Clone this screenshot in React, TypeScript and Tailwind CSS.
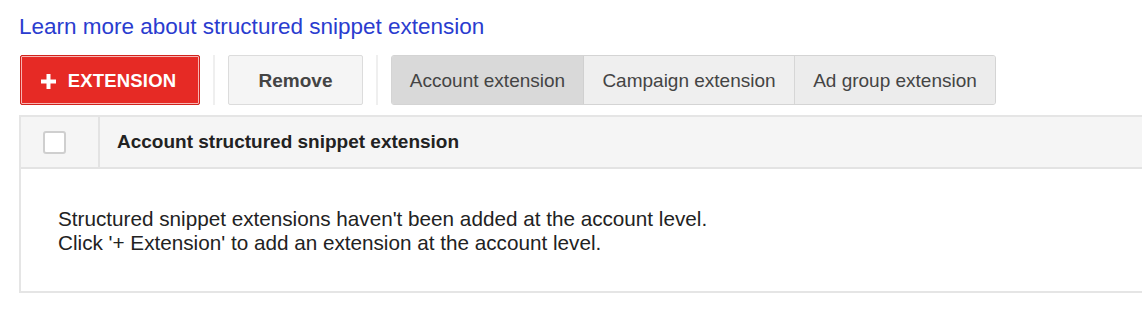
import React from 'react';

export default function App() {
  return (
    <div className="w-[1142px] h-[310px] overflow-hidden bg-white pl-[19px] pt-[14px] font-['Liberation_Sans',Arial,sans-serif]">
      {/* Link */}
      <a href="#" className="block text-[22.5px] leading-[26px] text-[#2a3ccf]">
        Learn more about structured snippet extension
      </a>

      {/* Toolbar */}
      <div className="mt-[15px] flex items-center h-[50px]">
        <button className="h-[50px] w-[180px] ml-[1px] pt-[2px] pr-[3px] flex items-center justify-center gap-[12px] rounded-[2px] border border-[#d0221c] bg-[#e62a25] shadow-[inset_0_0_0_1px_#f7b5b2] text-white font-bold text-[18.5px] tracking-[0.2px]">
          <svg width="15" height="15" viewBox="0 0 15 15">
            <path d="M5.5 0h4v5.5H15v4H9.5V15h-4V9.5H0v-4h5.5z" fill="#fff" />
          </svg>
          EXTENSION
        </button>

        <div className="mx-[13px] h-[50px] w-[2px] bg-[#efefef]" />

        <button className="h-[50px] w-[135px] pt-[2px] rounded-[2px] border border-[#dcdcdc] bg-[#f5f5f5] text-[19px] font-bold text-[#444]">
          Remove
        </button>

        <div className="mx-[13px] h-[50px] w-[2px] bg-[#efefef]" />

        <div className="flex h-[50px] pt-[2px] rounded-[3px] border border-[#d4d4d4] overflow-hidden text-[19px] text-[#444] bg-[#ececec]">
          <div className="w-[192px] -mt-[2px] pt-[2px] flex items-center justify-center bg-[#d9d9d9] border-r border-[#d0d0d0]">
            Account extension
          </div>
          <div className="w-[211px] -mt-[2px] pt-[2px] flex items-center justify-center bg-[#efefef] border-r border-[#d6d6d6]">
            Campaign extension
          </div>
          <div className="w-[200px] -mt-[2px] pt-[2px] flex items-center justify-center bg-[#ececec]">
            Ad group extension
          </div>
        </div>
      </div>

      {/* Table */}
      <div className="mt-[10px] w-[1140px] border-2 border-[#e5e5e5]">
        <div className="flex h-[52px] bg-[#f5f5f5] border-b-2 border-[#e3e3e3]">
          <div className="w-[79px] flex items-center pl-[22px] border-r-2 border-[#e3e3e3]">
            <div className="w-[23px] h-[23px] rounded-[3px] border-2 border-[#cfcfcf] bg-white" />
          </div>
          <div className="flex items-center pl-[17px] text-[19px] font-bold text-[#222]">
            Account structured snippet extension
          </div>
        </div>
        <div className="h-[122px] flex flex-col justify-center pl-[37px] pt-[2px] text-[20.7px] leading-[24px] text-[#222]">
          <p>Structured snippet extensions haven't been added at the account level.</p>
          <p>Click '+ Extension' to add an extension at the account level.</p>
        </div>
      </div>
    </div>
  );
}
